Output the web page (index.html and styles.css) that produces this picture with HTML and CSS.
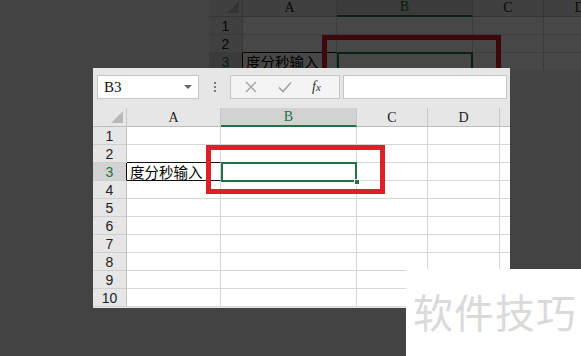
FILE: index.html
```html
<!DOCTYPE html>
<html>
<head>
<meta charset="utf-8">
<link rel="stylesheet" href="styles.css">
</head>
<body>
<div class="stage">
  <div class="ghost">
    <div class="sheet">
      <div class="hd corner"><span class="tri"></span></div>
      <div class="hd">A</div><div class="hd hd-sel">B</div><div class="hd">C</div><div class="hd">D</div><div class="hd">E</div>
      <div class="rh">1</div><div class="c"></div><div class="c"></div><div class="c"></div><div class="c"></div><div class="c"></div>
      <div class="rh">2</div><div class="c c-a2"></div><div class="c"></div><div class="c"></div><div class="c"></div><div class="c"></div>
      <div class="rh rh-sel">3</div><div class="c c-a3">度分秒输入</div><div class="c"></div><div class="c"></div><div class="c"></div><div class="c"></div>
      <div class="rh">4</div><div class="c"></div><div class="c"></div><div class="c"></div><div class="c"></div><div class="c"></div>
    </div>
    <div class="sel"><span class="handle"></span></div>
    <div class="redbox"></div>
    <div class="shade"></div>
  </div>

  <div class="window">
    <div class="toolbar">
      <div class="namebox"><span class="nb-text">B3</span><span class="nb-arrow"></span></div>
      <div class="dots"><i></i><i></i><i></i></div>
      <div class="fbtns">
        <svg class="ic" width="12" height="12" viewBox="0 0 12 12"><path d="M1 1L11 11M11 1L1 11" stroke="#a3a3a3" stroke-width="1.4" fill="none"/></svg>
        <svg class="ic" width="14" height="12" viewBox="0 0 14 12"><path d="M1 6.5L5 10.5L13 1.5" stroke="#a3a3a3" stroke-width="1.6" fill="none"/></svg>
        <span class="fx">f<small>x</small></span>
      </div>
      <div class="finput"></div>
    </div>
    <div class="grid-wrap">
      <div class="sheet">
        <div class="hd corner"><span class="tri"></span></div>
        <div class="hd">A</div><div class="hd hd-sel">B</div><div class="hd">C</div><div class="hd">D</div><div class="hd">E</div>
        <div class="rh">1</div><div class="c"></div><div class="c"></div><div class="c"></div><div class="c"></div><div class="c"></div>
        <div class="rh">2</div><div class="c c-a2"></div><div class="c"></div><div class="c"></div><div class="c"></div><div class="c"></div>
        <div class="rh rh-sel">3</div><div class="c c-a3">度分秒输入</div><div class="c"></div><div class="c"></div><div class="c"></div><div class="c"></div>
        <div class="rh">4</div><div class="c"></div><div class="c"></div><div class="c"></div><div class="c"></div><div class="c"></div>
        <div class="rh">5</div><div class="c"></div><div class="c"></div><div class="c"></div><div class="c"></div><div class="c"></div>
        <div class="rh">6</div><div class="c"></div><div class="c"></div><div class="c"></div><div class="c"></div><div class="c"></div>
        <div class="rh">7</div><div class="c"></div><div class="c"></div><div class="c"></div><div class="c"></div><div class="c"></div>
        <div class="rh">8</div><div class="c"></div><div class="c"></div><div class="c"></div><div class="c"></div><div class="c"></div>
        <div class="rh">9</div><div class="c"></div><div class="c"></div><div class="c"></div><div class="c"></div><div class="c"></div>
        <div class="rh">10</div><div class="c"></div><div class="c"></div><div class="c"></div><div class="c"></div><div class="c"></div>
      </div>
      <div class="sel"><span class="handle"></span></div>
      <div class="redbox"></div>
    </div>
  </div>

  <div class="watermark">软件技巧</div>
</div>
</body>
</html>
```

FILE: styles.css
```css
* { box-sizing: border-box; }
html, body { margin: 0; padding: 0; }
body {
  background: #434343;
  width: 581px;
  height: 356px;
  overflow: hidden;
  font-family: "Liberation Sans", sans-serif;
}
.stage {
  position: relative;
  width: 581px;
  height: 356px;
  overflow: hidden;
}

/* sheet grid */
.sheet {
  display: grid;
  grid-template-columns: 34px 94px 136px 71px 72px 60px;
  grid-template-rows: 19px repeat(10, 18px);
  background: #fff;
}
.hd {
  background: #e6e6e6;
  border-right: 1px solid #c8c8c8;
  border-bottom: 1px solid #bdbdbd;
  font-family: "Liberation Serif", serif;
  font-size: 14px;
  color: #222;
  display: flex;
  align-items: center;
  justify-content: center;
  line-height: 1;
  padding-top: 1px;
}
.hd-sel {
  background: #d2d2d2;
  color: #217346;
  border-bottom: 2px solid #217346;
}
.corner { position: relative; }
.tri {
  position: absolute;
  right: 3px;
  bottom: 3px;
  width: 0;
  height: 0;
  border-left: 12px solid transparent;
  border-bottom: 12px solid #b9b9b9;
}
.rh {
  background: #e6e6e6;
  border-right: 1px solid #c0c0c0;
  border-bottom: 1px solid #cfcfcf;
  font-size: 14px;
  color: #222;
  display: flex;
  align-items: center;
  justify-content: center;
  line-height: 1;
}
.rh-sel {
  background: #d2d2d2;
  color: #217346;
  border-right-color: #111;
}
.c {
  border-right: 1px solid #d6d6d6;
  border-bottom: 1px solid #d6d6d6;
}
.c-a2 { border-bottom-color: #111; }
.c-a3 {
  font-family: "Noto Sans CJK SC", sans-serif;
  font-size: 14.5px;
  line-height: 17px;
  color: #000;
  padding-left: 3px;
  white-space: nowrap;
  border-bottom-color: #111;
}

/* selection & red box (overlays) */
.sel {
  position: absolute;
  left: 128px;
  top: 54px;
  width: 136px;
  height: 20px;
  border: 2px solid #217346;
}
.handle {
  position: absolute;
  right: -5px;
  bottom: -5px;
  width: 6px;
  height: 6px;
  background: #217346;
  border: 1px solid #fff;
}
.redbox {
  position: absolute;
  left: 113px;
  top: 37px;
  width: 179px;
  height: 49px;
  border: 5px solid #dc1f28;
}

/* ghost (dimmed background screenshot) */
.ghost {
  position: absolute;
  left: 209px;
  top: -2px;
  width: 400px;
  height: 72px;
  overflow: hidden;
}
.shade {
  position: absolute;
  top: 0;
  left: 0;
  width: 100%;
  height: 100%;
  background: rgba(0, 0, 0, 0.72);
}

/* main window */
.window {
  position: absolute;
  left: 93px;
  top: 68px;
  width: 417px;
  height: 240px;
  background: #e6e6e6;
  overflow: hidden;
}
.toolbar {
  height: 40px;
  display: flex;
  align-items: flex-start;
  padding: 7px 0 0 4px;
}
.namebox {
  width: 102px;
  height: 24px;
  background: #fff;
  border: 1px solid #c6c6c6;
  display: flex;
  align-items: center;
  justify-content: space-between;
  padding: 0 6px 0 6px;
}
.nb-text {
  font-family: "Liberation Serif", serif;
  font-size: 15px;
  color: #111;
  padding-top: 1px;
}
.nb-arrow {
  width: 0;
  height: 0;
  border-left: 4px solid transparent;
  border-right: 4px solid transparent;
  border-top: 4px solid #666;
}
.dots {
  width: 31px;
  height: 24px;
  display: flex;
  flex-direction: column;
  align-items: center;
  justify-content: center;
  gap: 2px;
}
.dots i {
  display: block;
  width: 2px;
  height: 2px;
  background: #7a7a7a;
}
.fbtns {
  width: 110px;
  height: 24px;
  background: #f4f4f4;
  border: 1px solid #c6c6c6;
  display: flex;
  align-items: center;
  padding-left: 14px;
  gap: 21px;
}
.fx {
  font-family: "Liberation Serif", serif;
  font-style: italic;
  font-size: 14px;
  color: #333;
  margin-left: -1px;
}
.fx small { font-size: 11px; }
.finput {
  margin-left: 3px;
  width: 164px;
  height: 24px;
  background: #fff;
  border: 1px solid #c6c6c6;
}
.grid-wrap {
  position: relative;
}

/* watermark */
.watermark {
  position: absolute;
  left: 406px;
  top: 269px;
  width: 175px;
  height: 87px;
  background: #fff;
  font-family: "Noto Sans CJK SC", sans-serif;
  font-size: 40px;
  line-height: 40px;
  color: #dadada;
  padding: 22px 0 0 7px;
  letter-spacing: 1px;
  white-space: nowrap;
}
```
